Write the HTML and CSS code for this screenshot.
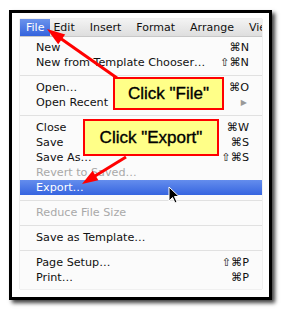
FILE: index.html
```html
<!DOCTYPE html>
<html>
<head>
    <meta charset="UTF-8">
    <title>File menu - Export</title>
    <link rel="stylesheet" href="styles.css">
</head>
<body>
    <div class="frame">
        <div class="menu">
            <div class="menubar">
                <span class="title active">File</span>
                <span class="title">Edit</span>
                <span class="title">Insert</span>
                <span class="title">Format</span>
                <span class="title">Arrange</span>
                <span class="title">View</span>
            </div>
            <ul class="items">
                <li class="item"><span>New</span><span class="key">⌘N</span></li>
                <li class="item"><span>New from Template Chooser…</span><span class="key">⇧⌘N</span></li>
                <li class="sep"></li>
                <li class="item"><span>Open…</span><span class="key">⌘O</span></li>
                <li class="item"><span>Open Recent</span><span class="submenu">▶</span></li>
                <li class="sep"></li>
                <li class="item"><span>Close</span><span class="key">⌘W</span></li>
                <li class="item"><span>Save</span><span class="key">⌘S</span></li>
                <li class="item"><span>Save As…</span><span class="key">⇧⌘S</span></li>
                <li class="item disabled"><span>Revert to Saved…</span></li>
                <li class="item selected"><span>Export…</span></li>
                <li class="sep"></li>
                <li class="item disabled"><span>Reduce File Size</span></li>
                <li class="sep"></li>
                <li class="item"><span>Save as Template…</span></li>
                <li class="sep"></li>
                <li class="item"><span>Page Setup…</span><span class="key">⇧⌘P</span></li>
                <li class="item"><span>Print…</span><span class="key">⌘P</span></li>
            </ul>
        </div>
    </div>

    <svg class="arrows" width="282" height="310" viewBox="0 0 282 310">
        <line x1="117" y1="78" x2="60" y2="38" stroke="#ff0000" stroke-width="3"/>
        <polygon points="47,29 58.2,44.3 65.2,34.5" fill="#ff0000"/>
        <line x1="126" y1="157" x2="95" y2="176" stroke="#ff0000" stroke-width="3"/>
        <polygon points="82,184 98.4,180.2 92.6,170.8" fill="#ff0000"/>
    </svg>

    <div class="callout callout-file">Click "File"</div>
    <div class="callout callout-export">Click "Export"</div>

    <svg class="cursor" width="12" height="18" viewBox="0 0 12 18">
        <path d="M1 1 L1 15 L4.5 11.5 L7 17 L9 16 L6.5 10.5 L11 10.5 Z" fill="#000" stroke="#fff" stroke-width="1"/>
    </svg>
</body>
</html>
```

FILE: styles.css
```css
body {
    margin: 0;
    padding: 10px 0 0 9px;
    box-sizing: border-box;
    background: #fff;
    position: relative;
    width: 282px;
    height: 310px;
    overflow: hidden;
    font-family: "DejaVu Sans", sans-serif;
}
.frame {
    box-sizing: border-box;
    width: 263px;
    height: 290px;
    border: 3px solid #000;
    background: #fff;
    padding: 6px 0 0 8px;
    box-shadow: 3px 3px 4px rgba(0, 0, 0, 0.75);
}
.menu {
    width: 242px;
    background: #fbfbfb;
    box-shadow: 0 0 1px rgba(0, 0, 0, 0.35);
}
.menubar {
    display: flex;
    gap: 15px;
    height: 18px;
    line-height: 18px;
    padding-left: 6px;
    font-size: 11px;
    color: #111;
    background: linear-gradient(#f3f3f3, #dedede);
    border-bottom: 1px solid #c8c8c8;
    box-sizing: border-box;
    overflow: hidden;
    white-space: nowrap;
}
.title.active {
    padding: 0 6px;
    margin: 0 -12px 0 -6px;
    color: #fff;
    background: linear-gradient(#6b93ec, #3463dd);
}
.items {
    list-style: none;
    margin: 0;
    padding: 3px 0 4px;
    font-size: 11.2px;
    color: #111;
}
.item {
    display: flex;
    justify-content: space-between;
    align-items: center;
    height: 15px;
    padding: 0 13px 0 16px;
}
.submenu {
    font-size: 8px;
    color: #999;
    margin-right: 2px;
}
.disabled {
    color: #a9a9a9;
}
.selected {
    color: #fff;
    background: linear-gradient(#648ded, #3665e0);
}
.sep {
    height: 1px;
    margin: 5px 0 4px;
    background: #e1e1e1;
}
.arrows {
    position: absolute;
    left: 0;
    top: 0;
}
.callout {
    position: absolute;
    box-sizing: border-box;
    display: flex;
    align-items: center;
    justify-content: center;
    border: 2px solid #ff0000;
    background: #ffff88;
    color: #000;
    font-family: "Liberation Sans", Arial, sans-serif;
    font-size: 17px;
    -webkit-text-stroke: 0.35px #000;
}
.callout-file {
    left: 113px;
    top: 77px;
    width: 111px;
    height: 33px;
}
.callout-export {
    left: 83px;
    top: 119px;
    width: 136px;
    height: 37px;
}
.cursor {
    position: absolute;
    left: 168px;
    top: 186px;
}
```
